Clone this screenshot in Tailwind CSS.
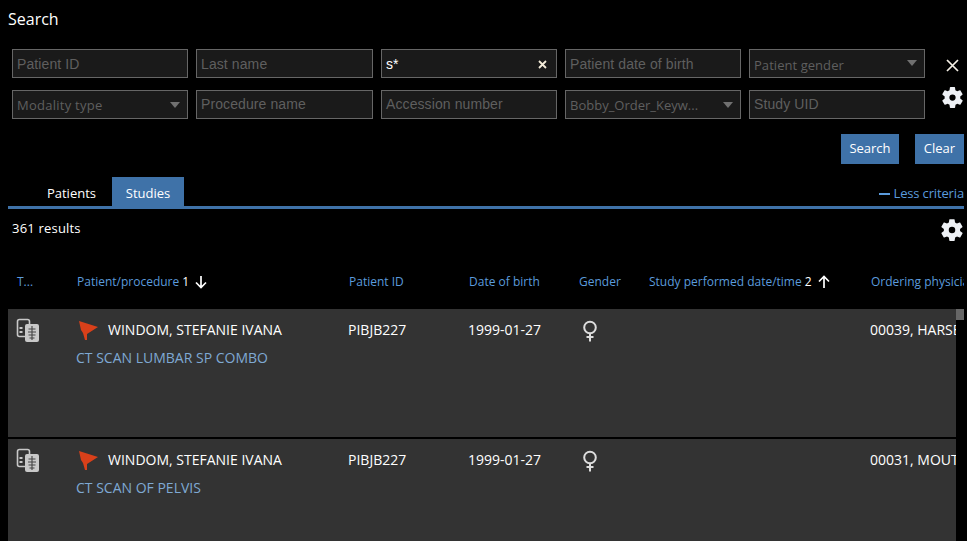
<!doctype html>
<html><head><meta charset="utf-8"><script src="https://cdn.jsdelivr.net/npm/@tailwindcss/browser@4"></script></head>
<body class="bg-black">
<div class="w-[967px] h-[541px] overflow-hidden bg-black text-white font-['Open_Sans',sans-serif] flex flex-col">
  <h1 class="h-[49px] pl-[8px] pt-[8px] text-[16px] leading-[22px] font-normal shrink-0">Search</h1>
  <div class="flex pl-[12px] h-[85px] shrink-0">
    <div class="grid grid-cols-[176px_177px_176px_176px_176px] grid-rows-[29px_29px] gap-x-[8px] gap-y-[12px] font-['Liberation_Sans',sans-serif] text-[14px] tracking-[0.1px] text-[#5f5f5f] shrink-0">
      <div class="border border-[#666] bg-[#1a1a1a] px-[4px] pt-[1px] flex items-center">Patient ID</div>
      <div class="border border-[#666] bg-[#1a1a1a] px-[4px] pt-[1px] flex items-center">Last name</div>
      <div class="border border-[#666] bg-[#1a1a1a] pl-[4px] pr-[9px] pt-[1px] flex items-center justify-between text-white"><span>s*</span>
        <svg class="w-[9px] h-[9px]" viewBox="0 0 9 9"><path d="M1 1l7 7M8 1l-7 7" stroke="#f2ead8" stroke-width="1.800"/></svg></div>
      <div class="border border-[#666] bg-[#1a1a1a] px-[4px] pt-[1px] flex items-center">Patient date of birth</div>
      <div class="border border-[#666] bg-[#1a1a1a] pl-[4px] pr-[7px] flex items-center justify-between font-['Open_Sans',sans-serif] text-[13px] tracking-normal"><span class="mt-[4px] tracking-[0.05px]">Patient gender</span>
        <svg class="w-[10px] h-[6px] mb-[1px]" viewBox="0 0 10 6"><path d="M0 0h10L5 6z" fill="#707070"/></svg></div>
      <div class="border border-[#666] bg-[#1a1a1a] pl-[4px] pr-[7px] flex items-center justify-between font-['Open_Sans',sans-serif] text-[13px] tracking-normal"><span class="mt-[2px] tracking-[0.25px]">Modality type</span>
        <svg class="w-[10px] h-[6px]" viewBox="0 0 10 6"><path d="M0 0h10L5 6z" fill="#707070"/></svg></div>
      <div class="border border-[#666] bg-[#1a1a1a] px-[4px] flex items-center">Procedure name</div>
      <div class="border border-[#666] bg-[#1a1a1a] px-[4px] flex items-center">Accession number</div>
      <div class="border border-[#666] bg-[#1a1a1a] pl-[4px] pr-[7px] flex items-center justify-between font-['Open_Sans',sans-serif] text-[13px] tracking-normal"><span class="mt-[2px]">Bobby_Order_Keyw...</span>
        <svg class="w-[10px] h-[6px]" viewBox="0 0 10 6"><path d="M0 0h10L5 6z" fill="#707070"/></svg></div>
      <div class="border border-[#666] bg-[#1a1a1a] px-[4px] flex items-center">Study UID</div>
    </div>
    <div class="ml-[16px] w-[22px] flex flex-col items-center shrink-0">
      <svg class="w-[13px] h-[13px] mt-[10px] shrink-0" viewBox="0 0 13 13"><path d="M1 1l11 11M12 1L1 12" stroke="#f5f0e6" stroke-width="1.700"/></svg>
      <svg class="w-[25px] h-[25px] mt-[13px] shrink-0" viewBox="0 0 24 24"><path fill="#eef1f5" fill-rule="evenodd" d="M19.400 13c.04-.33.060-.66.060-1s-.02-.67-.06-1l2.100-1.650c.19-.15.24-.42.120-.64l-2-3.460c-.12-.22-.39-.3-.61-.22l-2.490 1a7.300 7.300 0 0 0-1.730-1l-.38-2.650A.49.49 0 0 0 14 2h-4a.49.49 0 0 0-.49.420l-.38 2.650c-.63.250-1.200.59-1.730 1l-2.490-1c-.23-.09-.49 0-.61.220l-2 3.460c-.13.220-.07.490.12.640L4.520 11c-.04.330-.06.660-.06 1s.02.670.060 1l-2.100 1.650c-.19.150-.24.420-.12.640l2 3.460c.12.220.39.300.61.220l2.490-1c.53.400 1.100.740 1.730 1l.38 2.650c.04.240.25.420.49.420h4c.24 0 .45-.18.490-.42l.38-2.650c.63-.26 1.200-.6 1.730-1l2.490 1c.23.090.49 0 .61-.22l2-3.460c.12-.22.070-.49-.12-.64zM12 15a3 3 0 1 1 0-6 3 3 0 0 1 0 6z"/></svg>
    </div>
  </div>
  <div class="flex justify-end gap-[16px] h-[43px] pr-[3px] shrink-0 text-[13px]">
    <div class="w-[58px] h-[30px] bg-[#3f72a8] flex items-center justify-center">Search</div>
    <div class="w-[49px] h-[30px] bg-[#3f72a8] flex items-center justify-center">Clear</div>
  </div>
  <div class="ml-[8px] mr-[3px] h-[32px] border-b-[3px] border-[#3f72a8] flex items-end text-[13px] shrink-0">
    <div class="w-[104px] h-[29px] pt-[4px] flex items-center justify-end pr-[16px]">Patients</div>
    <div class="w-[72px] h-[29px] pt-[4px] bg-[#3f72a8] flex items-center justify-center">Studies</div>
    <div class="ml-auto h-[29px] pt-[5px] flex items-center gap-[4px] text-[#5b9bdc] text-[13px] tracking-[-0.15px]"><span class="w-[11px] h-[2px] bg-[#5b9bdc]"></span><span>Less criteria</span></div>
  </div>
  <div class="h-[41px] flex items-center justify-between pl-[12px] pr-[2px] text-[13px] shrink-0">
    <span class="tracking-[0.2px] -mt-[2px]">361 results</span>
    <svg class="w-[26px] h-[26px]" viewBox="0 0 24 24"><path fill="#eef1f5" fill-rule="evenodd" d="M19.400 13c.04-.33.060-.66.060-1s-.02-.67-.06-1l2.100-1.650c.19-.15.24-.42.120-.64l-2-3.460c-.12-.22-.39-.3-.61-.22l-2.490 1a7.300 7.300 0 0 0-1.730-1l-.38-2.650A.49.49 0 0 0 14 2h-4a.49.49 0 0 0-.49.420l-.38 2.650c-.63.250-1.200.59-1.730 1l-2.490-1c-.23-.09-.49 0-.61.220l-2 3.460c-.13.220-.07.490.12.640L4.520 11c-.04.330-.06.660-.06 1s.02.670.060 1l-2.100 1.650c-.19.150-.24.420-.12.640l2 3.460c.12.220.39.300.61.220l2.490-1c.53.400 1.100.740 1.730 1l.38 2.650c.04.240.25.420.49.420h4c.24 0 .45-.18.490-.42l.38-2.650c.63-.26 1.200-.6 1.730-1l2.490 1c.23.090.49 0 .61-.22l2-3.460c.12-.22.070-.49-.12-.64zM12 15a3 3 0 1 1 0-6 3 3 0 0 1 0 6z"/></svg>
  </div>
  <div class="h-[59px] pl-[17px] mr-[3px] flex items-center text-[12px] text-[#5b9bdc] shrink-0 whitespace-nowrap overflow-hidden pt-[5px]">
    <span class="w-[60px] shrink-0">T...</span>
    <span class="w-[272px] shrink-0 flex items-center">Patient/procedure <span class="text-white ml-[3px]">1</span>
      <svg class="w-[14px] h-[14px] ml-[5px]" viewBox="0 0 14 14"><path d="M7 1v11M2 7.500l5 5 5-5" fill="none" stroke="#fff" stroke-width="1.700"/></svg></span>
    <span class="w-[120px] shrink-0">Patient ID</span>
    <span class="w-[110px] shrink-0">Date of birth</span>
    <span class="w-[70px] shrink-0">Gender</span>
    <span class="w-[222px] shrink-0 flex items-center">Study performed date/time <span class="text-white ml-[3px]">2</span>
      <svg class="w-[14px] h-[14px] ml-[5px]" viewBox="0 0 14 14"><path d="M7 13V2M2 6.500l5-5 5 5" fill="none" stroke="#fff" stroke-width="1.700"/></svg></span>
    <span class="shrink-0">Ordering physician</span>
  </div>
  <div class="flex-1 min-h-0 flex ml-[8px] mr-[3px] overflow-hidden">
    <div class="w-[948px] shrink-0 flex flex-col gap-[2px] overflow-hidden">
      <div class="h-[128px] bg-[#333] shrink-0 flex text-[14px] whitespace-nowrap overflow-hidden">
        <div class="w-[69px] shrink-0 pl-[8px] pt-[9px]"><svg class="w-[24px] h-[25px]" viewBox="0 0 24 25"><rect x="1.500" y="1.500" width="12" height="17" rx="2" fill="none" stroke="#c8c8c8" stroke-width="1.600"/><path d="M3.500 9h3v2h-3zM3.500 13h3v2h-3z" fill="#c8c8c8"/><rect x="9" y="6" width="14" height="18" rx="2" fill="#c8c8c8"/><path d="M16 8v14M12.500 11h7M12 14h8M12.500 17h7M13.500 20h5" stroke="#444" stroke-width="1.100"/></svg></div>
        <div class="w-[271px] shrink-0 pt-[11px]">
          <div class="flex items-center h-[20px]"><svg class="w-[21px] h-[20px] shrink-0" viewBox="0 0 21 20"><path d="M2 1l19 6-11 7v6H8L6 13 4 10z" fill="#d9401a"/></svg><span class="ml-[10px] -mt-[1px]">WINDOM, STEFANIE IVANA</span></div>
          <div class="text-[#7fa9d3] mt-[8px] leading-[20px] -ml-[1px]">CT SCAN LUMBAR SP COMBO</div>
        </div>
        <div class="w-[120px] shrink-0 pt-[11px] leading-[20px]">PIBJB227</div>
        <div class="w-[110px] shrink-0 pt-[11px] leading-[20px]">1999-01-27</div>
        <div class="w-[292px] shrink-0 pt-[11px]"><svg class="w-[16px] h-[23px] ml-[4px]" viewBox="0 0 16 23"><circle cx="8" cy="7.500" r="5.800" fill="none" stroke="#ddd" stroke-width="2"/><path d="M8 13v8.500M4.500 17h7" stroke="#ddd" stroke-width="2"/></svg></div>
        <div class="pt-[11px] leading-[20px]">00039, HARSEN</div>
      </div>
      <div class="h-[128px] bg-[#333] shrink-0 flex text-[14px] whitespace-nowrap overflow-hidden">
        <div class="w-[69px] shrink-0 pl-[8px] pt-[9px]"><svg class="w-[24px] h-[25px]" viewBox="0 0 24 25"><rect x="1.500" y="1.500" width="12" height="17" rx="2" fill="none" stroke="#c8c8c8" stroke-width="1.600"/><path d="M3.500 9h3v2h-3zM3.500 13h3v2h-3z" fill="#c8c8c8"/><rect x="9" y="6" width="14" height="18" rx="2" fill="#c8c8c8"/><path d="M16 8v14M12.500 11h7M12 14h8M12.500 17h7M13.500 20h5" stroke="#444" stroke-width="1.100"/></svg></div>
        <div class="w-[271px] shrink-0 pt-[11px]">
          <div class="flex items-center h-[20px]"><svg class="w-[21px] h-[20px] shrink-0" viewBox="0 0 21 20"><path d="M2 1l19 6-11 7v6H8L6 13 4 10z" fill="#d9401a"/></svg><span class="ml-[10px] -mt-[1px]">WINDOM, STEFANIE IVANA</span></div>
          <div class="text-[#7fa9d3] mt-[8px] leading-[20px] -ml-[1px]">CT SCAN OF PELVIS</div>
        </div>
        <div class="w-[120px] shrink-0 pt-[11px] leading-[20px]">PIBJB227</div>
        <div class="w-[110px] shrink-0 pt-[11px] leading-[20px]">1999-01-27</div>
        <div class="w-[292px] shrink-0 pt-[11px]"><svg class="w-[16px] h-[23px] ml-[4px]" viewBox="0 0 16 23"><circle cx="8" cy="7.500" r="5.800" fill="none" stroke="#ddd" stroke-width="2"/><path d="M8 13v8.500M4.500 17h7" stroke="#ddd" stroke-width="2"/></svg></div>
        <div class="pt-[11px] leading-[20px]">00031, MOUTON</div>
      </div>
    </div>
    <div class="w-[8px] shrink-0 bg-black"><div class="h-[11px] bg-[#666]"></div></div>
  </div>
</div>
</body></html>
